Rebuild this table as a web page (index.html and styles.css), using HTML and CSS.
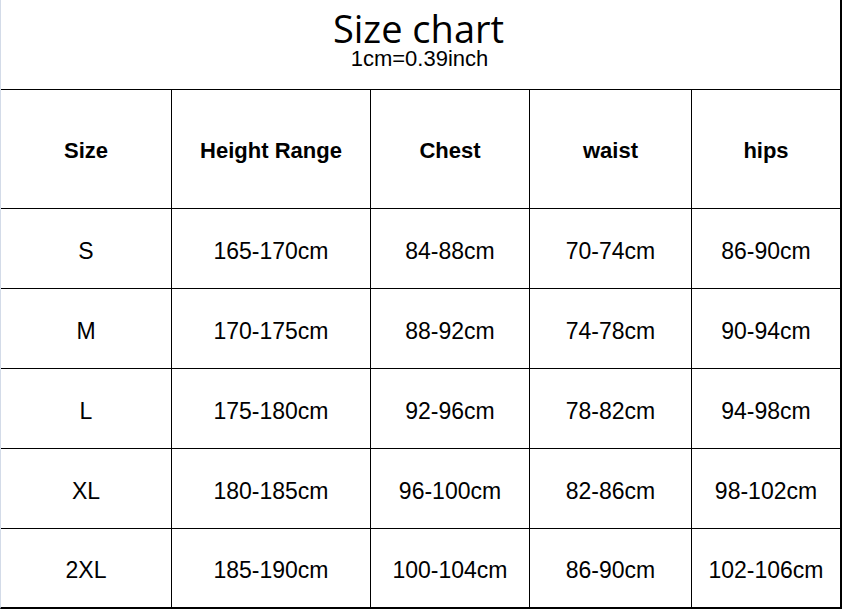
FILE: index.html
```html
<!DOCTYPE html>
<html>
<head>
<meta charset="utf-8">
<link rel="stylesheet" href="styles.css">
</head>
<body>
<div class="sheet">
  <div class="title">
    <div class="title-main">Size chart</div>
    <div class="title-sub">1cm=0.39inch</div>
  </div>
  <div class="grid">
    <div class="cell head">Size</div>
    <div class="cell head">Height Range</div>
    <div class="cell head">Chest</div>
    <div class="cell head">waist</div>
    <div class="cell head">hips</div>

    <div class="cell">S</div>
    <div class="cell">165-170cm</div>
    <div class="cell">84-88cm</div>
    <div class="cell">70-74cm</div>
    <div class="cell">86-90cm</div>

    <div class="cell">M</div>
    <div class="cell">170-175cm</div>
    <div class="cell">88-92cm</div>
    <div class="cell">74-78cm</div>
    <div class="cell">90-94cm</div>

    <div class="cell">L</div>
    <div class="cell">175-180cm</div>
    <div class="cell">92-96cm</div>
    <div class="cell">78-82cm</div>
    <div class="cell">94-98cm</div>

    <div class="cell">XL</div>
    <div class="cell">180-185cm</div>
    <div class="cell">96-100cm</div>
    <div class="cell">82-86cm</div>
    <div class="cell">98-102cm</div>

    <div class="cell">2XL</div>
    <div class="cell">185-190cm</div>
    <div class="cell">100-104cm</div>
    <div class="cell">86-90cm</div>
    <div class="cell">102-106cm</div>
  </div>
</div>
</body>
</html>
```

FILE: styles.css
```css
html, body {
  margin: 0;
  padding: 0;
  background: #fff;
}

.sheet {
  width: 842px;
  height: 609px;
  box-sizing: border-box;
  border-left: 1px solid #d3dbe8;
  border-right: 2px solid #000;
  border-bottom: 2px solid #000;
  display: flex;
  flex-direction: column;
  color: #000;
}

.title {
  box-sizing: border-box;
  border-bottom: 1px solid #000;
  height: 90px;
  display: flex;
  flex-direction: column;
  align-items: center;
}

.title-main {
  font-family: "Open Sans", "Noto Sans", sans-serif;
  font-size: 38px;
  line-height: 38px;
  margin-top: 9px;
  margin-left: -4px;
}

.title-sub {
  font-family: "Liberation Sans", Arial, sans-serif;
  font-size: 22px;
  line-height: 22px;
  margin-top: 1px;
  margin-left: -2px;
}

.grid {
  display: grid;
  grid-template-columns: 170px 198px 158px 161px 148px;
  grid-template-rows: 118px 79px 79px 79px 79px 78px;
  gap: 1px;
  background: #000;
}

.cell {
  background: #fff;
  display: flex;
  align-items: center;
  justify-content: center;
  font-family: "Liberation Sans", Arial, sans-serif;
  font-size: 23px;
  padding-top: 5px;
  box-sizing: border-box;
}

.head {
  font-weight: bold;
  font-size: 22px;
  padding-top: 4px;
}
```
